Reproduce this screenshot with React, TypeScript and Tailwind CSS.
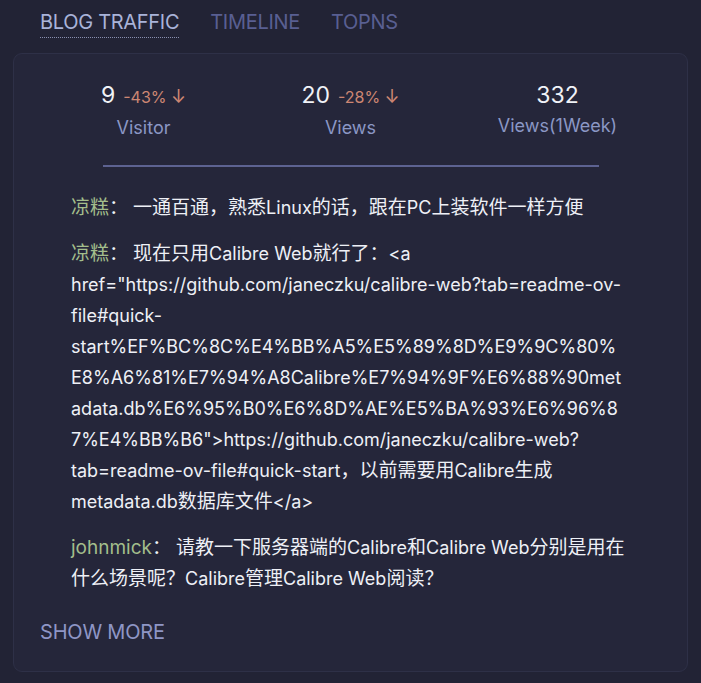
import React from "react";

const stats = [
  { value: "9", delta: "-43%", label: "Visitor" },
  { value: "20", delta: "-28%", label: "Views" },
  { value: "332", delta: "", label: "Views(1Week)" },
];

const comments = [
  { name: "凉糕", text: "一通百通，熟悉Linux的话，跟在PC上装软件一样方便" },
  {
    name: "凉糕",
    text:
      '现在只用Calibre Web就行了：<a href="https://github.com/janeczku/calibre-web?tab=readme-ov-file#quick-start%EF%BC%8C%E4%BB%A5%E5%89%8D%E9%9C%80%E8%A6%81%E7%94%A8Calibre%E7%94%9F%E6%88%90metadata.db%E6%95%B0%E6%8D%AE%E5%BA%93%E6%96%87%E4%BB%B6">https://github.com/janeczku/calibre-web?tab=readme-ov-file#quick-start，以前需要用Calibre生成metadata.db数据库文件</a>',
  },
  { name: "johnmick", text: "请教一下服务器端的Calibre和Calibre Web分别是用在什么场景呢？Calibre管理Calibre Web阅读？" },
];

const CJK = /([\u2E80-\u9FFF\u3000-\u303F\uFF00-\uFFEF]+)/;

function Mixed({ text }: { text: string }) {
  const parts = text.split(CJK).filter((p) => p.length > 0);
  return (
    <>
      {parts.map((p, i) =>
        CJK.test(p) ? (
          <span key={i} className="text-[19px]">
            {p}
          </span>
        ) : (
          <span key={i}>{p}</span>
        )
      )}
    </>
  );
}

export default function App() {
  return (
    <div
      className="min-h-[683px] w-full bg-[#222335] pb-[12px]"
      style={{ fontFamily: 'Inter, "Noto Sans CJK SC", sans-serif' }}
    >
      <div className="flex gap-[31px] pl-[40px] pt-[10px] text-[20px] leading-[24px] tracking-[-0.3px]">
        <span className="border-b border-dotted border-[#8a90b0] pb-[3px] text-[#a9b3d9]">BLOG TRAFFIC</span>
        <span className="text-[#595f92]">TIMELINE</span>
        <span className="text-[#595f92]">TOPNS</span>
      </div>
      <div className="mx-[13px] mt-[15px] rounded-[9px] border border-[#2e3047] bg-[#25263a] px-[26px] pb-[25px] pt-[25px]">
        <div className="grid grid-cols-3">
          {stats.map((s) => (
            <div key={s.label} className="flex flex-col items-center">
              <div className="flex items-baseline gap-[8px] leading-[32px]">
                <span className="text-[23px] text-[#f0f2f7]">{s.value}</span>
                {s.delta && (
                  <span className="text-[16px] text-[#cd8673]">
                    {s.delta} <span className="text-[18px]">↓</span>
                  </span>
                )}
              </div>
              <div className="mt-[1px] text-[18px] leading-[28px] text-[#8b97c5]">{s.label}</div>
            </div>
          ))}
        </div>
        <div className="mx-auto mt-[23px] h-[2px] w-[496px] bg-[#5d6291]" />
        <div className="mt-[25px] flex flex-col gap-[15px] pl-[31px]">
          {comments.map((c, i) => (
            <p
              key={i}
              className="w-[555px] text-[18px] leading-[31px] text-[#eef0f6] [overflow-wrap:anywhere]"
            >
              <span className="text-[19px] text-[#a3be8c]">
                <Mixed text={c.name} />
              </span>
              <span className="text-[19px]">：</span>
              <span> </span>
              <Mixed text={c.text} />
            </p>
          ))}
        </div>
        <div className="mt-[24px] text-[20px] leading-[28px] tracking-[-0.2px] text-[#8f96c6]">SHOW MORE</div>
      </div>
    </div>
  );
}
